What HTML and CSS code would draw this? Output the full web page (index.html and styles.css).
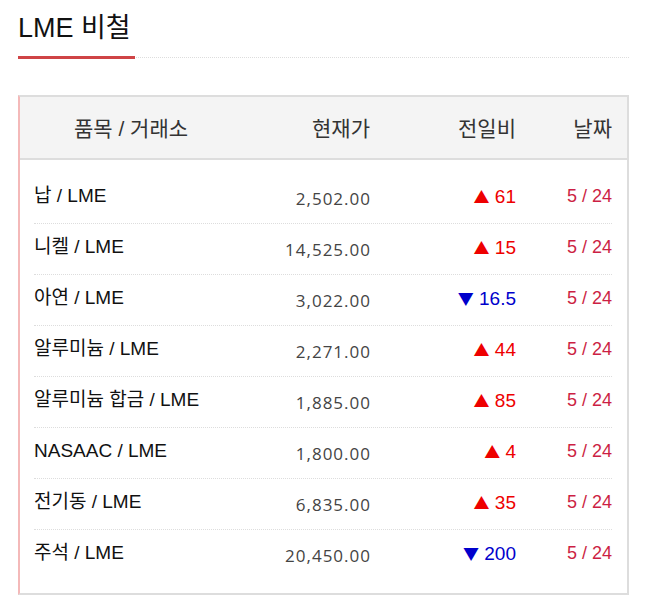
FILE: index.html
```html
<!DOCTYPE html>
<html lang="ko">
<head>
<meta charset="utf-8">
<title>LME 비철</title>
<link rel="stylesheet" href="styles.css">
</head>
<body>
<div class="page">
  <div class="title-bar">
    <h2 class="title">LME 비철</h2>
  </div>
  <div class="board">
    <div class="grid head">
      <div class="c-name">품목 / 거래소</div>
      <div class="c-price">현재가</div>
      <div class="c-chg">전일비</div>
      <div class="c-date">날짜</div>
    </div>
    <div class="rows">
      <div class="grid row"><div class="c-name">납 / LME</div><div class="c-price">2,502.00</div><div class="c-chg up"><span class="arrow">▲</span> 61</div><div class="c-date">5 / 24</div></div>
      <div class="grid row"><div class="c-name">니켈 / LME</div><div class="c-price">14,525.00</div><div class="c-chg up"><span class="arrow">▲</span> 15</div><div class="c-date">5 / 24</div></div>
      <div class="grid row"><div class="c-name">아연 / LME</div><div class="c-price">3,022.00</div><div class="c-chg down"><span class="arrow">▼</span> 16.5</div><div class="c-date">5 / 24</div></div>
      <div class="grid row"><div class="c-name">알루미늄 / LME</div><div class="c-price">2,271.00</div><div class="c-chg up"><span class="arrow">▲</span> 44</div><div class="c-date">5 / 24</div></div>
      <div class="grid row"><div class="c-name">알루미늄 합금 / LME</div><div class="c-price">1,885.00</div><div class="c-chg up"><span class="arrow">▲</span> 85</div><div class="c-date">5 / 24</div></div>
      <div class="grid row"><div class="c-name">NASAAC / LME</div><div class="c-price">1,800.00</div><div class="c-chg up"><span class="arrow">▲</span> 4</div><div class="c-date">5 / 24</div></div>
      <div class="grid row"><div class="c-name">전기동 / LME</div><div class="c-price">6,835.00</div><div class="c-chg up"><span class="arrow">▲</span> 35</div><div class="c-date">5 / 24</div></div>
      <div class="grid row"><div class="c-name">주석 / LME</div><div class="c-price">20,450.00</div><div class="c-chg down"><span class="arrow">▼</span> 200</div><div class="c-date">5 / 24</div></div>
    </div>
  </div>
</div>
</body>
</html>
```
FILE: styles.css
```css
html, body {
  margin: 0;
  padding: 0;
  background: #fff;
}
body {
  font-family: "Liberation Sans", Arial, "Noto Sans CJK KR", sans-serif;
  color: #111;
}
.page {
  padding: 0 18px;
}
.title-bar {
  display: flex;
  padding-top: 12px;
  height: 45px;
  border-bottom: 1px dotted #ddd;
}
.title {
  margin: 0 0 -2px 0;
  width: 117px;
  font-size: 27px;
  font-weight: normal;
  line-height: 32px;
  color: #111;
  border-bottom: 3px solid #cf4446;
  box-sizing: border-box;
  height: 47px;
}
.board {
  margin-top: 37px;
  border: 2px solid #ddd;
  border-left-color: #f4b9b9;
}
.grid {
  display: grid;
  grid-template-columns: 194px 142px 146px 96px;
}
.head {
  height: 63px;
  align-items: center;
  background: #f4f4f4;
  border-bottom: 2px solid #ddd;
  padding: 0 15px 2px 14px;
  box-sizing: border-box;
  font-size: 21px;
  color: #333;
}
.head .c-name {
  text-align: center;
}
.c-price, .c-chg, .c-date {
  text-align: right;
}
.rows {
  padding: 13px 15px 12px 14px;
}
.row {
  height: 51px;
  box-sizing: border-box;
  padding-top: 12px;
  line-height: 22px;
  font-size: 19px;
  border-bottom: 1px dotted #ddd;
}
.row:last-child {
  border-bottom: none;
}
.row .c-price {
  font-family: "Open Sans", sans-serif;
  font-size: 17px;
  letter-spacing: 1px;
  color: #444;
  padding-top: 3px;
  margin-right: -1px;
}
.row .c-chg {
  font-size: 19px;
}
.arrow {
  font-family: "Noto Sans CJK KR", sans-serif;
  font-size: 16px;
}
.up {
  color: #ee0000;
}
.down {
  color: #0000cc;
}
.row .c-date {
  font-size: 18px;
  color: #cc1f44;
}
```
